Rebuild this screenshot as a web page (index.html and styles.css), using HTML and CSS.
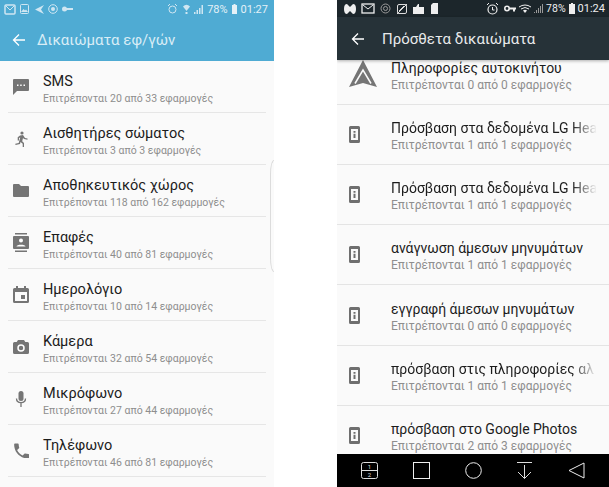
FILE: index.html
```html
<!DOCTYPE html>
<html lang="el">
<head>
  <meta charset="UTF-8">
  <title>Δικαιώματα</title>
  <link rel="stylesheet" href="styles.css">
</head>
<body>
  <svg class="sprites" width="0" height="0">
    <symbol id="info" viewBox="0 0 11 17">
      <path fill="#6f6f6f" fill-rule="evenodd" d="M1.500 0h8A1.500 1.500 0 0 1 11 1.500v14A1.500 1.500 0 0 1 9.500 17h-8A1.500 1.500 0 0 1 0 15.500v-14A1.500 1.500 0 0 1 1.500 0zM2 3v11h7V3z"/>
      <path fill="#6f6f6f" d="M4.500 5h2v1.700h-2zM4.500 7.700h2v4.300h-2z"/>
    </symbol>
  </svg>

  <div class="phone phone-left">
    <div class="status status-left">
      <div class="status-icons">
        <svg width="12" height="11" viewBox="0 0 12 11"><rect x="1" y="1" width="10" height="9" rx="1" fill="none" stroke="#cfe6f2" stroke-width="1.500"/><path d="M2 2l4 4 4-4" fill="none" stroke="#cfe6f2"/></svg>
        <svg width="9" height="10" viewBox="0 0 9 10"><rect x="0.500" y="0.500" width="8" height="9" rx="1" fill="none" stroke="#cfe6f2"/><path d="M1 8l2.500-3 1.500 1.500 1-1L8 8z" fill="#cfe6f2"/></svg>
        <svg class="gap-wide" width="9" height="9" viewBox="0 0 9 9"><path d="M9 0L0 4.500 9 9 6 4.500z" fill="#cfe6f2"/></svg>
        <svg width="10" height="10" viewBox="0 0 10 10"><circle cx="5" cy="5" r="4.300" fill="none" stroke="#cfe6f2"/><circle cx="5" cy="5" r="2" fill="#cfe6f2"/></svg>
        <svg width="11" height="6" viewBox="0 0 11 6"><circle cx="2.500" cy="3" r="2.500" fill="#cfe6f2"/><path d="M4 2h7v2H4z" fill="#cfe6f2"/></svg>
      </div>
      <div class="status-right">
        <svg width="9" height="10" viewBox="0 0 9 10"><circle cx="4.500" cy="5.500" r="3.500" fill="none" stroke="#cfe6f2"/><path d="M0 2l2-2M9 2L7 0" stroke="#cfe6f2"/></svg>
        <svg class="gap-wide" width="7" height="10" viewBox="0 0 7 10"><path d="M0 2.500Q3.500-1 7 2.500L3.500 7z" fill="#cfe6f2"/><path d="M2.500 8h2v2h-2z" fill="#cfe6f2"/></svg>
        <svg width="9" height="9" viewBox="0 0 9 9"><path d="M0 9h1.500V7H0zM2.500 9H4V5H2.500zM5 9h1.500V3H5zM7.500 9H9V0H7.500z" fill="#cfe6f2"/></svg>
        <span class="status-pct">78%</span>
        <svg width="5" height="10" viewBox="0 0 5 10"><path d="M1.500 0h2v1H5v9H0V1h1.500z" fill="#e4f1f7"/></svg>
        <span class="status-time">01:27</span>
      </div>
    </div>
    <div class="appbar appbar-left">
      <svg class="back" width="14" height="14" viewBox="0 0 14 14"><path d="M13 7H2M7 1.500L1.500 7 7 12.500" fill="none" stroke="#fff" stroke-width="1.300"/></svg>
      <span class="appbar-title">Δικαιώματα εφ/γών</span>
    </div>
    <div class="list list-left">
      <div class="row">
        <svg class="icon" width="16" height="16" viewBox="0 0 16 16"><path d="M1 0h14a1 1 0 0 1 1 1v10a1 1 0 0 1-1 1H4l-4 4V1a1 1 0 0 1 1-1z" fill="#757575"/><path d="M4 5.500h1.500V7H4zM7.200 5.500h1.500V7H7.200zM10.500 5.500H12V7h-1.500z" fill="#fff"/></svg>
        <div class="row-text"><div class="row-title">SMS</div><div class="row-sub">Επιτρέπονται 20 από 33 εφαρμογές</div></div>
      </div>
      <div class="row">
        <svg class="icon" width="16" height="16" viewBox="0 0 16 16"><circle cx="9" cy="2" r="1.600" fill="#757575"/><path d="M7 4.500l3-.5 2 3 2.500.5v1.200L11 8 10 7l-.8 3.200L11 12v4H9.700v-3.200L7.500 11 7 13l-4.500 1-.2-1.300 3.400-.8L7.200 6.500 6 7v2.500H4.700V6.300z" fill="#757575"/></svg>
        <div class="row-text"><div class="row-title">Αισθητήρες σώματος</div><div class="row-sub">Επιτρέπονται 3 από 3 εφαρμογές</div></div>
      </div>
      <div class="row">
        <svg class="icon" width="16" height="13" viewBox="0 0 16 13"><path d="M1 0h5l2 2h7a1 1 0 0 1 1 1v9a1 1 0 0 1-1 1H1a1 1 0 0 1-1-1V1a1 1 0 0 1 1-1z" fill="#757575"/></svg>
        <div class="row-text"><div class="row-title">Αποθηκευτικός χώρος</div><div class="row-sub">Επιτρέπονται 118 από 162 εφαρμογές</div></div>
      </div>
      <div class="row">
        <svg class="icon" width="16" height="19" viewBox="0 0 16 19"><path d="M2 0h12v1.500H2zM2 17.500h12V19H2z" fill="#757575"/><rect y="3" width="16" height="13" rx="1" fill="#757575"/><circle cx="8" cy="7.500" r="2" fill="#fff"/><path d="M3.500 13.500c0-2.500 9-2.500 9 0z" fill="#fff"/></svg>
        <div class="row-text"><div class="row-title">Επαφές</div><div class="row-sub">Επιτρέπονται 40 από 81 εφαρμογές</div></div>
      </div>
      <div class="row">
        <svg class="icon" width="16" height="17" viewBox="0 0 16 17"><path fill="#757575" fill-rule="evenodd" d="M3 0h2v2h6V0h2v2h1.500A1.500 1.500 0 0 1 16 3.500v12a1.500 1.500 0 0 1-1.500 1.500h-13A1.500 1.500 0 0 1 0 15.500v-12A1.500 1.500 0 0 1 1.500 2H3zM2 6v9h12V6z"/><path fill="#757575" d="M8 9h4v4H8z"/></svg>
        <div class="row-text"><div class="row-title">Ημερολόγιο</div><div class="row-sub">Επιτρέπονται 10 από 14 εφαρμογές</div></div>
      </div>
      <div class="row">
        <svg class="icon" width="16" height="14" viewBox="0 0 16 14"><path fill="#757575" d="M5 0h6l1.300 2h2.200A1.500 1.500 0 0 1 16 3.500v9a1.500 1.500 0 0 1-1.500 1.500h-13A1.500 1.500 0 0 1 0 12.500v-9A1.500 1.500 0 0 1 1.500 2h2.200z"/><circle cx="8" cy="8" r="3" fill="none" stroke="#fff" stroke-width="1.500"/></svg>
        <div class="row-text"><div class="row-title">Κάμερα</div><div class="row-sub">Επιτρέπονται 32 από 54 εφαρμογές</div></div>
      </div>
      <div class="row">
        <svg class="icon" width="16" height="16" viewBox="0 0 16 16"><rect x="5.500" y="0" width="5" height="10" rx="2.500" fill="#757575"/><path d="M3.500 7.500c0 5.500 9 5.500 9 0M8 11.500V16" fill="none" stroke="#757575" stroke-width="1.300"/></svg>
        <div class="row-text"><div class="row-title">Μικρόφωνο</div><div class="row-sub">Επιτρέπονται 27 από 44 εφαρμογές</div></div>
      </div>
      <div class="row">
        <svg class="icon" width="15" height="15" viewBox="0 0 24 24"><path fill="#757575" d="M6.600 10.800c1.400 2.800 3.800 5.100 6.600 6.600l2.200-2.200c.3-.3.700-.4 1-.2 1.100.4 2.300.6 3.600.6.600 0 1 .4 1 1V20c0 .6-.4 1-1 1C10.600 21 3 13.400 3 4c0-.6.400-1 1-1h3.500c.6 0 1 .4 1 1 0 1.300.2 2.500.6 3.600.1.300 0 .7-.2 1z" transform="translate(-3 -3) scale(1.330)"/></svg>
        <div class="row-text"><div class="row-title">Τηλέφωνο</div><div class="row-sub">Επιτρέπονται 46 από 81 εφαρμογές</div></div>
      </div>
    </div>
    <div class="edge-handle"></div>
  </div>

  <div class="phone phone-right">
    <div class="status status-right-phone">
      <div class="status-icons status-icons-dark">
        <svg width="12" height="10" viewBox="0 0 12 10"><path d="M0 5Q0 0 3 0L6 3 9 0Q12 0 12 5T9 10L6 7 3 10Q0 10 0 5z" fill="#eee"/></svg>
        <svg width="14" height="11" viewBox="0 0 14 11"><rect x="1" y="1" width="12" height="9" fill="none" stroke="#eee" stroke-width="1.300"/><path d="M2 2l5 4 5-4" fill="none" stroke="#eee"/></svg>
        <svg width="11" height="11" viewBox="0 0 11 11"><circle cx="5.500" cy="5.500" r="4.500" fill="none" stroke="#999"/><circle cx="5.500" cy="5.500" r="2" fill="none" stroke="#999"/></svg>
        <svg width="12" height="12" viewBox="0 0 12 12"><rect x="1.500" y="1.500" width="9" height="9" rx="1.500" fill="none" stroke="#ddd"/><path d="M1 11L11 1M3 8l5-5" stroke="#ddd"/></svg>
        <svg width="11" height="11" viewBox="0 0 11 11"><path d="M0 4h3l2-3h1v3h5v7H0z" fill="#eee"/></svg>
        <svg class="gap-wide" width="7" height="11" viewBox="0 0 7 11"><path d="M2 0h5v11H0V2z" fill="#eee"/></svg>
      </div>
      <div class="status-right status-right-dark">
        <svg width="13" height="12" viewBox="0 0 13 12"><circle cx="6.500" cy="6.500" r="4.500" fill="none" stroke="#eee" stroke-width="1.200"/><path d="M6.500 4v3h2M1 2l2-2M12 2l-2-2" fill="none" stroke="#eee"/></svg>
        <svg class="gap-wide" width="12" height="7" viewBox="0 0 12 7"><circle cx="3" cy="3.500" r="2.200" fill="none" stroke="#eee" stroke-width="1.600"/><path d="M5 2.500h7v2h-1v2H9v-2H5z" fill="#eee"/></svg>
        <svg width="12" height="9" viewBox="0 0 12 9"><path d="M0 3Q6-1 12 3M2 5Q6 2 10 5" fill="none" stroke="#eee"/><path d="M4 6.500Q6 5 8 6.500L6 9z" fill="#eee"/></svg>
        <svg width="9" height="9" viewBox="0 0 9 9"><path d="M0 8h1v1H0zM2 6h1v3H2zM4 4h1v5H4zM6 2h1v7H6zM8 0h1v9H8z" fill="#999"/></svg>
        <span class="status-pct-dark">78%</span>
        <svg width="6" height="11" viewBox="0 0 6 11"><path d="M2 0h2v1h2v10H0V1h2z" fill="#eee"/></svg>
        <span class="status-time-dark">01:24</span>
      </div>
    </div>
    <div class="appbar appbar-right">
      <svg class="back" width="14" height="14" viewBox="0 0 14 14"><path d="M13 7H2M7 1.500L1.500 7 7 12.500" fill="none" stroke="#fff" stroke-width="1.300"/></svg>
      <span class="appbar-title appbar-title-right">Πρόσθετα δικαιώματα</span>
    </div>
    <div class="list list-right">
      <div class="row2 row2-first">
        <svg class="icon-auto" width="28" height="28" viewBox="0 0 28 28"><path d="M14 0L28 27 14 23 0 27z" fill="#757575"/><path d="M6 23.500L14 10l8 13.500" fill="none" stroke="#fafafa" stroke-width="1.500"/></svg>
        <div class="row-text"><div class="row2-title">Πληροφορίες αυτοκινήτου</div><div class="row2-sub">Επιτρέπονται 0 από 0 εφαρμογές</div></div>
      </div>
      <div class="row2">
        <svg class="icon2" width="11" height="17"><use href="#info"/></svg>
        <div class="row-text"><div class="row2-title title-fade">Πρόσβαση στα δεδομένα LG Hea</div><div class="row2-sub">Επιτρέπονται 1 από 1 εφαρμογές</div></div>
      </div>
      <div class="row2">
        <svg class="icon2" width="11" height="17"><use href="#info"/></svg>
        <div class="row-text"><div class="row2-title title-fade">Πρόσβαση στα δεδομένα LG Hea</div><div class="row2-sub">Επιτρέπονται 1 από 1 εφαρμογές</div></div>
      </div>
      <div class="row2">
        <svg class="icon2" width="11" height="17"><use href="#info"/></svg>
        <div class="row-text"><div class="row2-title">ανάγνωση άμεσων μηνυμάτων</div><div class="row2-sub">Επιτρέπονται 1 από 1 εφαρμογές</div></div>
      </div>
      <div class="row2">
        <svg class="icon2" width="11" height="17"><use href="#info"/></svg>
        <div class="row-text"><div class="row2-title">εγγραφή άμεσων μηνυμάτων</div><div class="row2-sub">Επιτρέπονται 0 από 0 εφαρμογές</div></div>
      </div>
      <div class="row2">
        <svg class="icon2" width="11" height="17"><use href="#info"/></svg>
        <div class="row-text"><div class="row2-title title-fade">πρόσβαση στις πληροφορίες αλ</div><div class="row2-sub">Επιτρέπονται 1 από 1 εφαρμογές</div></div>
      </div>
      <div class="row2">
        <svg class="icon2" width="11" height="17"><use href="#info"/></svg>
        <div class="row-text"><div class="row2-title">πρόσβαση στο Google Photos</div><div class="row2-sub">Επιτρέπονται 2 από 3 εφαρμογές</div></div>
      </div>
    </div>
    <div class="navbar">
      <svg width="17" height="17" viewBox="0 0 17 17"><rect x="0.500" y="0.500" width="16" height="16" rx="2" fill="none" stroke="#ddd"/><path d="M1 8.500h15" stroke="#ddd"/><text x="8.500" y="7" class="nav-num">1</text><text x="8.500" y="15" class="nav-num">2</text></svg>
      <svg width="17" height="17" viewBox="0 0 17 17"><rect x="0.500" y="0.500" width="16" height="16" fill="none" stroke="#eee"/></svg>
      <svg width="17" height="17" viewBox="0 0 17 17"><circle cx="8.500" cy="8.500" r="7.800" fill="none" stroke="#eee"/></svg>
      <svg width="17" height="17" viewBox="0 0 17 17"><path d="M1 0.500h15M8.500 3v13.500M2 10l6.500 6.500L15 10" fill="none" stroke="#ddd"/></svg>
      <svg width="17" height="17" viewBox="0 0 17 17"><path d="M16 1v15L1 8.500z" fill="none" stroke="#eee"/></svg>
    </div>
  </div>
</body>
</html>
```

FILE: styles.css
```css
html, body {
  margin: 0;
  padding: 0;
}
body {
  width: 609px;
  height: 487px;
  overflow: hidden;
  background-color: #fff;
  display: flex;
  justify-content: space-between;
  font-family: Roboto, "Noto Sans", sans-serif;
}
.sprites {
  position: absolute;
}
.phone {
  height: 487px;
  overflow: hidden;
  background-color: #fafafa;
  position: relative;
  display: flex;
  flex-direction: column;
}
.phone-left {
  width: 274px;
}
.phone-right {
  width: 272px;
}

/* status bars */
.status {
  display: flex;
  align-items: center;
  justify-content: space-between;
  flex-shrink: 0;
}
.status-left {
  height: 18px;
  padding: 0 6px 0 4px;
  background-color: #4fabd3;
  color: #e4f1f7;
}
.status-right-phone {
  height: 17px;
  padding: 0 4px 0 7px;
  background-color: #1c262b;
  color: #eee;
}
.status-icons {
  display: flex;
  align-items: center;
  gap: 4px;
}
.status-icons-dark {
  gap: 5px;
}
.status-right {
  display: flex;
  align-items: center;
  gap: 4px;
}
.status-right-dark {
  gap: 3px;
}
.gap-wide {
  margin-left: 2px;
}
.status-pct, .status-time {
  font-size: 11px;
}
.status-pct-dark {
  font-size: 10.500px;
}
.status-time-dark {
  font-size: 11px;
}

/* app bars */
.appbar {
  display: flex;
  align-items: center;
  flex-shrink: 0;
}
.appbar-left {
  height: 43px;
  padding-left: 12px;
  background-color: #4fabd3;
}
.appbar-right {
  height: 43px;
  padding-left: 14px;
  background-color: #263238;
  box-shadow: 0 1px 3px rgba(0, 0, 0, 0.3);
  position: relative;
}
.appbar-title {
  margin-left: 11px;
  font-size: 15px;
  color: #d9edf6;
}
.appbar-title-right {
  margin-left: 17px;
  color: #e8eaeb;
}

/* left list */
.list-left {
  padding-left: 8px;
}
.row {
  height: 51px;
  width: 258px;
  border-bottom: 1px solid #e6e6e6;
  display: flex;
  align-items: center;
}
.icon {
  width: 16px;
  margin: 0 14px 0 5px;
  flex-shrink: 0;
}
.row-text {
  min-width: 0;
  white-space: nowrap;
}
.row .row-text {
  margin-top: 4px;
}
.row-title {
  font-size: 14.500px;
  line-height: 20px;
  color: #1c1c1c;
}
.row-sub {
  font-size: 10.500px;
  line-height: 14px;
  color: #8e8e8e;
}
.edge-handle {
  position: absolute;
  right: 0;
  top: 160px;
  width: 4px;
  height: 112px;
  border: 1px solid #dcdcdc;
  border-right: none;
  border-radius: 4px 0 0 4px / 14px 0 0 14px;
  box-sizing: border-box;
}

/* right list */
.list-right {
  flex: 1;
  min-height: 0;
  overflow: hidden;
}
.row2 {
  height: 59.300px;
  border-bottom: 1px solid #e4e4e4;
  display: flex;
  align-items: center;
  overflow: hidden;
}
.row2 .row-text {
  margin-top: 2px;
}
.row2-first {
  height: 43.600px;
  align-items: flex-end;
}
.row2-first .row-text {
  margin: 0 0 11px;
}
.icon2 {
  margin: 0 31px 0 12px;
  flex-shrink: 0;
}
.icon-auto {
  margin: 0 14px 0 12px;
  align-self: flex-start;
  flex-shrink: 0;
}
.row2-title {
  font-size: 14px;
  line-height: 20px;
  color: #1c1c1c;
}
.title-fade {
  width: 206px;
  overflow: hidden;
  -webkit-mask-image: linear-gradient(to right, #000 88%, transparent);
  mask-image: linear-gradient(to right, #000 88%, transparent);
}
.row2-sub {
  font-size: 12px;
  line-height: 15px;
  color: #8e8e8e;
}

/* nav bar */
.navbar {
  height: 33px;
  flex-shrink: 0;
  background-color: #000;
  display: flex;
  align-items: center;
  justify-content: space-between;
  padding: 0 24px;
  position: relative;
}
.nav-num {
  fill: #ddd;
  font-size: 6px;
  text-anchor: middle;
}
```
